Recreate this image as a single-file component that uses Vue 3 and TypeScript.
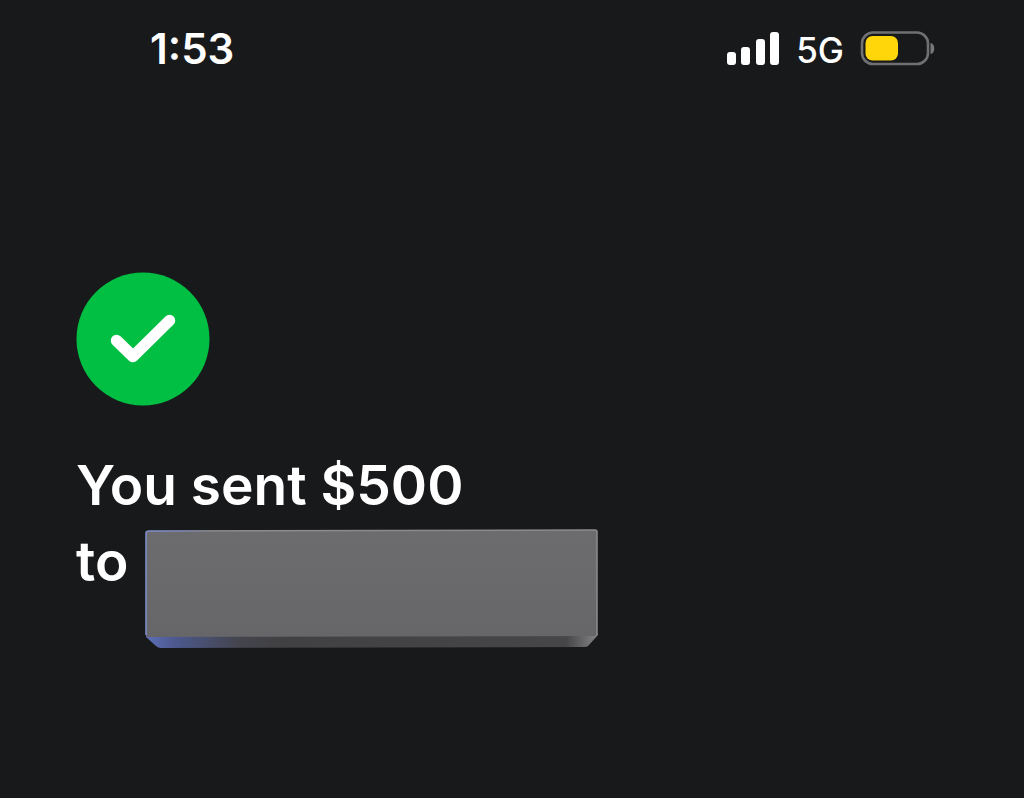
<script setup lang="ts">
const time = '1:53'
const network = '5G'
const amount = '$500'
const bars = [
  { x: 0, height: 13 },
  { x: 14, height: 18 },
  { x: 29, height: 26 },
  { x: 43, height: 33 },
]
</script>

<template>
  <div class="screen">
    <header class="status">
      <time class="time">{{ time }}</time>
      <div class="indicators">
        <svg class="signal" width="53" height="34" viewBox="0 0 53 34" role="img" aria-label="Signal strength">
          <rect v-for="bar in bars" :key="bar.x" :x="bar.x" :y="33 - bar.height" width="9" :height="bar.height" rx="3" />
        </svg>
        <span class="network">{{ network }}</span>
        <svg class="battery" width="76" height="36" viewBox="0 0 76 36" role="img" aria-label="Battery at half">
          <rect x="2" y="1.500" width="66" height="31.500" rx="11" fill="none" stroke="#6f7072" stroke-width="2.600" />
          <rect x="5.500" y="5" width="32.500" height="24.500" rx="7" fill="#ffd60a" />
          <path d="M70.500 12C75.500 12.500 75.500 22.500 70.500 23Z" fill="#77787a" />
        </svg>
      </div>
    </header>

    <main class="receipt">
      <svg class="check" width="134" height="134" viewBox="0 0 134 134" role="img" aria-label="Sent">
        <circle cx="67" cy="67" r="66.500" fill="#00bf42" />
        <path d="M40.500 68.500L57 84.500L93.500 48.500" fill="none" stroke="#fff" stroke-width="11.500" stroke-linecap="round" stroke-linejoin="round" />
      </svg>
      <h1 class="message">
        <span>You sent {{ amount }}</span>
        <span class="recipient">
          to
          <svg class="redaction" width="454" height="122" viewBox="0 0 454 122" role="img" aria-label="Hidden recipient">
            <defs>
              <linearGradient id="face" x1="0" y1="0" x2="0" y2="1">
                <stop offset="0" stop-color="#6c6c6e" />
                <stop offset="0.5" stop-color="#6a6a6c" />
                <stop offset="1" stop-color="#666668" />
              </linearGradient>
              <linearGradient id="side" x1="0" y1="0" x2="1" y2="0">
                <stop offset="0" stop-color="#5d70b8" />
                <stop offset="0.060" stop-color="#4d5990" />
                <stop offset="0.200" stop-color="#44454f" />
                <stop offset="0.300" stop-color="#414143" />
                <stop offset="0.930" stop-color="#464648" />
                <stop offset="1" stop-color="#858587" />
              </linearGradient>
              <linearGradient id="edge" x1="0" y1="0" x2="454" y2="0" gradientUnits="userSpaceOnUse">
                <stop offset="0" stop-color="#8191d1" />
                <stop offset="0.080" stop-color="#8088bc" />
                <stop offset="0.140" stop-color="#8a8a8e" />
                <stop offset="1" stop-color="#8c8c8e" />
              </linearGradient>
            </defs>
            <path d="M1 106L453 106V107L443 118Q442 119 439 119L16 120Q13 120 11 118L1 109Z" fill="url(#side)" />
            <path d="M4 3L450 2Q452 2 452 4V105Q452 108 449 108L4 109Q1 109 1 106V5Q1 3 4 3Z" fill="url(#face)" />
            <path d="M1 107V5Q1 3 4 3L450 2Q452 2 452 4V107" fill="none" stroke="url(#edge)" stroke-width="1.500" />
          </svg>
        </span>
      </h1>
    </main>
  </div>
</template>

<style>
body {
  background: #18191b;
}
</style>

<style scoped>
.screen {
  min-height: 100vh;
  box-sizing: border-box;
  padding: 20px 76px 40px;
  background: #18191b;
  color: #fff;
  font-family: Inter, "Liberation Sans", sans-serif;
}

.status {
  display: flex;
  align-items: center;
  justify-content: space-between;
  height: 58px;
  padding: 0 12px 0 74px;
}

.time {
  font-size: 42px;
  line-height: 58px;
  font-weight: 600;
}

.indicators {
  display: flex;
  align-items: center;
}

.signal {
  fill: #fff;
}

.network {
  margin: 2px 16px 0;
  font-size: 35px;
  line-height: 44px;
  font-weight: 500;
}

.receipt {
  padding-top: 194px;
}

.check {
  display: block;
}

.message {
  margin: 41px 0 0;
  font-size: 55px;
  line-height: 76px;
  font-weight: 600;
}

.message span {
  display: block;
}

.message .recipient {
  display: flex;
  align-items: flex-start;
  gap: 17px;
}

.redaction {
  flex: none;
  margin-top: 5px;
}
</style>
